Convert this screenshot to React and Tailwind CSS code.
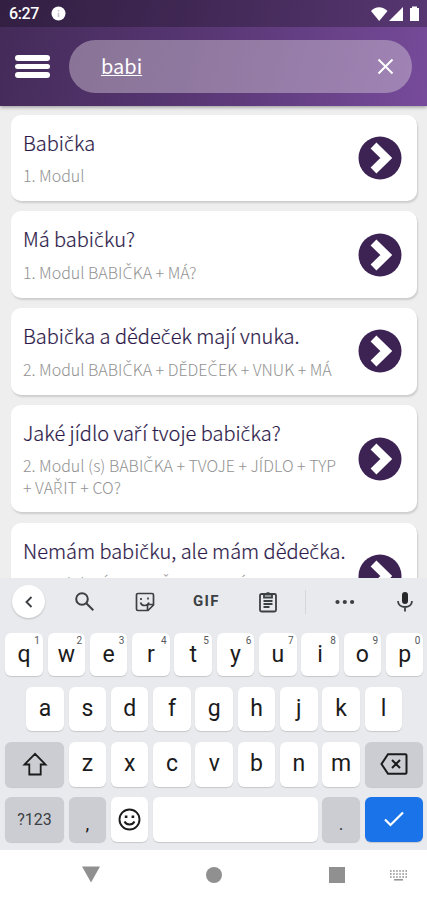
import React from "react";

const results = [
  { title: "Babička", module: "1. Modul", rest: "", height: "h-[86.500px]" },
  { title: "Má babičku?", module: "1. Modul", rest: "BABIČKA + MÁ?", height: "h-[86.500px]" },
  { title: "Babička a dědeček mají vnuka.", module: "2. Modul", rest: "BABIČKA + DĚDEČEK + VNUK + MÁ", height: "h-[86.500px]" },
  { title: "Jaké jídlo vaří tvoje babička?", module: "2. Modul", rest: "(s) BABIČKA + TVOJE + JÍDLO + TYP\n+ VAŘIT + CO?", height: "h-[107.500px]" },
  { title: "Nemám babičku, ale mám dědečka.", module: "2. Modul", rest: "MÁ + BABIČKA + NEMÁ", height: "h-[107.500px]" },
];

// The CJK family has no č or ř, so those letters take a similar light face.
function Czech({ text }) {
  return text.split(/([čřČŘ])/).map((part, i) =>
    i % 2 === 1 ? (
      <span key={i} className="pr-[0.500px] font-['Open_Sans',sans-serif] leading-none">{part}</span>
    ) : (
      part
    )
  );
}

function StatusBar() {
  return (
    <div className="flex h-[27px] items-center bg-black/25 pl-[9px] pr-[7px] text-white">
      <span className="w-[30px] font-[Roboto] text-[16px] font-medium tracking-[-0.4px]">6:27</span>
      <svg className="ml-[12px]" width="15" height="15" viewBox="0 0 15 15">
        <circle cx="7.5" cy="7.5" r="7" fill="#fff" />
        <path d="M7.5 4v1.5M7.5 6.8V11" stroke="#c9c3cf" strokeWidth="1.6" />
      </svg>
      <svg className="ml-auto" width="50" height="16" viewBox="0 0 50 16" fill="#fff">
        <path d="M1 5C5-0.1 13-0.1 17.500 5L9.200 15z" />
        <path d="M19 15 33 1v14z" />
        <path d="M40 2h2V.5h5V2h2v13H40z" />
      </svg>
    </div>
  );
}

function Card({ title, module, rest, height }) {
  return (
    <div className={`flex shrink-0 items-center rounded-[10px] bg-white pl-[12px] pr-[15px] shadow-[1px_2px_2px_rgba(0,0,0,0.14)] ${height}`}>
      <div className="min-w-0 flex-1 self-start pt-[14px]">
        <div className="h-[28px] whitespace-nowrap text-[20px] font-light leading-[28px] text-[#2d1a4a] [-webkit-text-stroke:0.2px_#2d1a4a]"><Czech text={title} /></div>
        <div className="mt-[8.500px] whitespace-pre text-[16px] font-light leading-[21.500px] text-[#929292]">
          <Czech text={rest ? `${module} ${rest}` : module} />
        </div>
      </div>
      <svg width="44" height="44" viewBox="0 0 44 44" className="shrink-0">
        <circle cx="22" cy="22" r="21.500" fill="#3d2354" />
        <path d="M15.500 9.500 28.300 22 15.500 34.500" fill="none" stroke="#fff" strokeWidth="8.300" />
      </svg>
    </div>
  );
}

function Key({ label, hint, width = "w-[37.5px]", tone = "bg-white", children }) {
  return (
    <div className={`relative flex h-full items-center justify-center rounded-[6px] font-[Roboto] text-[23px] text-[#1b1b1c] shadow-[0_1px_1px_rgba(0,0,0,0.15)] ${width} ${tone}`}>
      {label && <span className="mt-[1px]">{label}</span>}
      {hint && <span className="absolute right-[3px] top-[2px] text-[10px] leading-[12px] text-[#55585c]">{hint}</span>}
      {children}
    </div>
  );
}

function Toolbar() {
  return (
    <div className="flex h-[47px] items-center pl-[12px] pr-[14px] text-[#3c4043]">
      <div className="flex size-[33px] items-center justify-center rounded-full bg-white shadow-[0_1px_2px_rgba(0,0,0,0.2)]">
        <svg width="12" height="14" viewBox="0 0 12 14" fill="none" stroke="currentColor" strokeWidth="1.9"><path d="M8.500 2 3.500 7l5 5" /></svg>
      </div>
      <svg className="ml-[29px]" width="21" height="21" viewBox="0 0 21 21" fill="none" stroke="currentColor" strokeWidth="2">
        <circle cx="8" cy="8" r="5.800" /><path d="m12.300 12.300 7 7" />
      </svg>
      <svg className="ml-[40px]" width="20" height="20" viewBox="0 0 20 20" fill="none" stroke="currentColor" strokeWidth="1.700">
        <path d="M3 1.500h14a1.500 1.500 0 0 1 1.500 1.500v10L13 18.500H3A1.500 1.500 0 0 1 1.500 17V3A1.500 1.500 0 0 1 3 1.500zM18.500 12.500H14a1.500 1.500 0 0 0-1.500 1.500v4.500M5.500 10.500c1 4 7 4 8.500 0M6 6v2M13 5.500v2" />
      </svg>
      <span className="ml-[38px] w-[27px] font-[Roboto] text-[15px] font-bold leading-none tracking-[1.300px]">GIF</span>
      <svg className="ml-[38px]" width="20" height="22" viewBox="0 0 20 22" fill="none" stroke="currentColor" strokeWidth="1.800">
        <rect x="2" y="3" width="16" height="17.500" rx="1.500" />
        <path d="M6 3.500h8v3H6zM8.500 2.200h3M5.500 10h9M5.500 13h9M5.500 16h6" />
      </svg>
      <div className="ml-[27px] h-[24px] w-px bg-[#d5d7da]" />
      <svg className="ml-[29px]" width="20" height="6" viewBox="0 0 20 6" fill="currentColor">
        <circle cx="2.500" cy="3" r="2.100" /><circle cx="9.800" cy="3" r="2.100" /><circle cx="17.100" cy="3" r="2.100" />
      </svg>
      <svg className="ml-auto" width="16" height="21" viewBox="0 0 16 21" fill="none" stroke="currentColor" strokeWidth="1.800">
        <rect x="5" y="1" width="6" height="12" rx="3" fill="#26282a" stroke="none" />
        <path d="M1 10c0 8 14 8 14 0M8 16v4.500" />
      </svg>
    </div>
  );
}

function Keyboard() {
  return (
    <div className="relative h-[272px] bg-[#e8eaed]">
      <Toolbar />
      <div className="mt-[7.500px] flex h-[43.500px] gap-[4.800px] pl-[5.300px]">
        {"qwertyuiop".split("").map((c, i) => <Key key={c} label={c} hint={String((i + 1) % 10)} />)}
      </div>
      <div className="mt-[11px] flex h-[43.500px] gap-[4.800px] pl-[26.300px]">
        {"asdfghjkl".split("").map((c) => <Key key={c} label={c} />)}
      </div>
      <div className="mt-[11px] flex h-[45px] gap-[4.800px] pl-[5.300px]">
        <Key width="w-[58.500px]" tone="bg-[#cbcdd2]">
          <svg width="26" height="24" viewBox="0 0 26 24" fill="none" stroke="currentColor" strokeWidth="1.800"><path d="M13 1.800 2.500 12.500H7.300V22.500H18.700V12.500H23.500z" /></svg>
        </Key>
        {"zxcvbnm".split("").map((c) => <Key key={c} label={c} />)}
        <Key width="w-[58.500px]" tone="bg-[#cbcdd2]">
          <svg width="28" height="22" viewBox="0 0 28 22" fill="none" stroke="currentColor" strokeWidth="2"><path d="M8 1.200h17.500a1 1 0 0 1 1 1v17.600a1 1 0 0 1-1 1H8L1.500 11zM12 7l8 8M20 7l-8 8" /></svg>
        </Key>
      </div>
      <div className="mt-[10px] flex h-[45.500px] gap-[4.800px] pl-[5.300px]">
        <Key width="w-[58.500px]" tone="bg-[#cbcdd2]"><span className="mt-[2px] text-[16px] text-[#3c4043]">?123</span></Key>
        <Key tone="bg-[#cbcdd2]"><span className="mt-[9px] text-[19px]">,</span></Key>
        <Key>
          <svg width="23" height="23" viewBox="0 0 23 23" fill="none" stroke="currentColor" strokeWidth="1.900">
            <circle cx="11.500" cy="11.500" r="10" /><path d="M6.500 13.500c2 4 8 4 10 0" /><path d="M6.800 8.800h2.600M13.600 8.800h2.600" strokeWidth="2.500" />
          </svg>
        </Key>
        <Key width="w-[164.400px]" />
        <Key tone="bg-[#cbcdd2]"><span className="mt-[9px] text-[18px] text-[#444]">.</span></Key>
        <Key width="w-[58.500px]" tone="bg-[#1a73e8]">
          <svg width="22" height="18" viewBox="0 0 22 18" fill="none" stroke="#fff" strokeWidth="2.200"><path d="m2 9.500 5.500 5.500L20 2.500" /></svg>
        </Key>
      </div>
    </div>
  );
}

function NavBar() {
  return (
    <div className="flex h-[50px] items-center bg-white pl-[82px] text-[#909090]">
      <svg width="18" height="17" viewBox="0 0 18 17" fill="currentColor" className="-mt-[2px]"><path d="M0 .5h18L9 16.500z" /></svg>
      <div className="ml-[106px] size-[16px] rounded-full bg-[#909090]" />
      <div className="ml-[107px] size-[16px] bg-[#909090]" />
      <svg className="ml-[45px]" width="17" height="11" viewBox="0 0 17 11" stroke="currentColor" strokeWidth="1.500">
        <path d="M0 1h17M0 4h17M0 7h17" strokeDasharray="1.600 1.480" /><path d="M4 9.800h9" />
      </svg>
    </div>
  );
}

export default function App() {
  return (
    <div className="flex h-[900px] w-[427px] flex-col overflow-hidden bg-[#eee] font-['Noto_Sans_CJK_JP',sans-serif]">
      <header className="z-10 h-[106px] shrink-0 bg-[linear-gradient(105deg,#432a58_0%,#573672_45%,#774b9b_100%)] shadow-[0_1px_4px_rgba(0,0,0,0.4)]">
        <StatusBar />
        <div className="flex items-center pl-[15px] pt-[13px]">
          <div className="flex w-[35px] flex-col gap-[3px]">
            <div className="h-[5.500px] rounded-[3px] bg-white" />
            <div className="h-[5.500px] rounded-[3px] bg-white" />
            <div className="h-[5.500px] rounded-[3px] bg-white" />
          </div>
          <div className="ml-[19px] flex h-[53px] w-[343px] items-center justify-between rounded-full bg-[#d5cad8]/45 pl-[32px] pr-[18px] text-white">
            <span className="-mt-[2px] text-[20px] font-normal underline decoration-1 underline-offset-[1px] [text-decoration-skip-ink:none]">babi</span>
            <svg width="17" height="17" viewBox="0 0 17 17" fill="none" stroke="currentColor" strokeWidth="2"><path d="m1.500 1.500 14 14M15.500 1.500l-14 14" /></svg>
          </div>
        </div>
      </header>
      <main className="flex h-[472px] shrink-0 flex-col gap-[10.300px] overflow-hidden pl-[11px] pr-[10px] pt-[8.500px]">
        {results.map((item) => <Card key={item.title} {...item} />)}
      </main>
      <Keyboard />
      <NavBar />
    </div>
  );
}
